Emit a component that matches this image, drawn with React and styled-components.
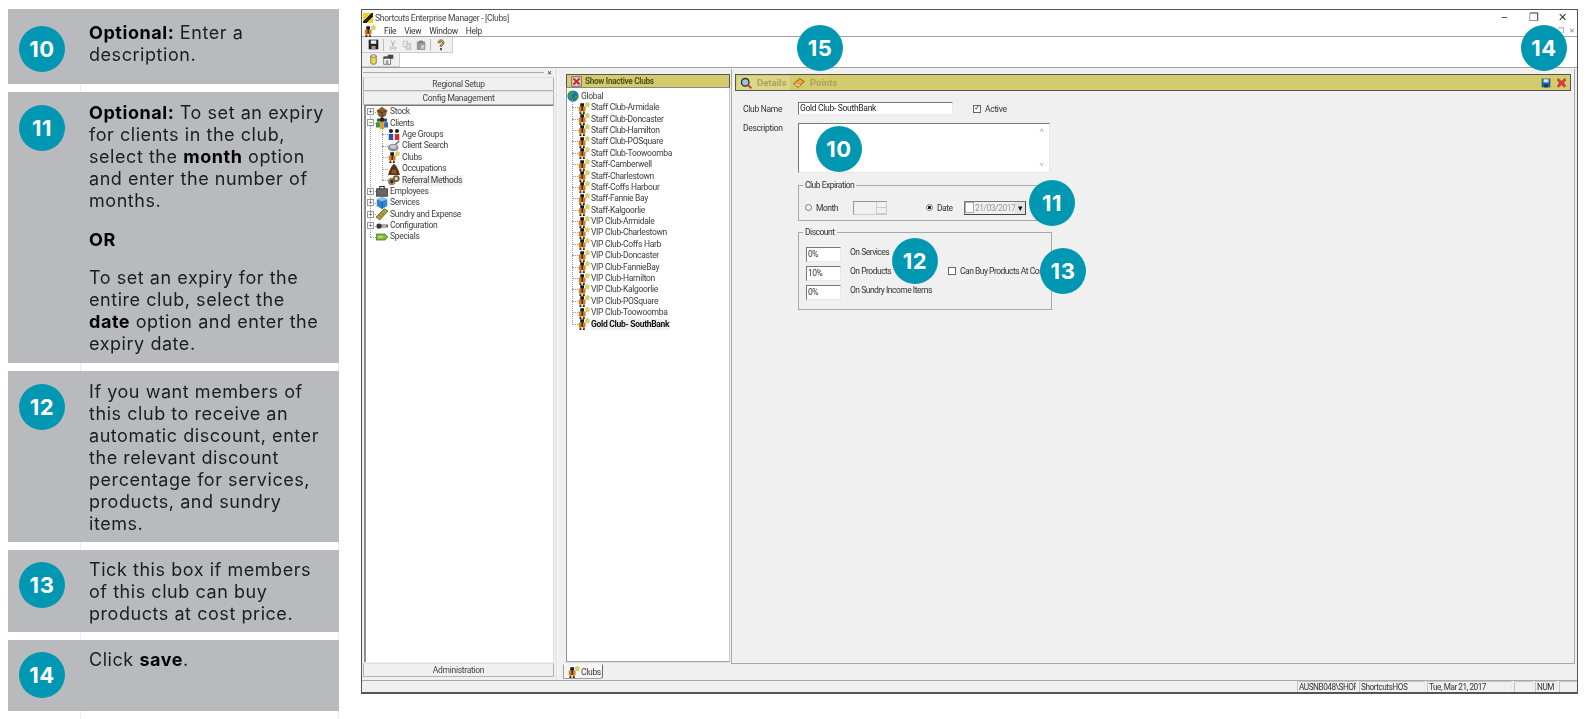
import React from 'react'
import styled, { createGlobalStyle } from 'styled-components'

const CLUBS = [
  'Staff Club-Armidale',
  'Staff Club-Doncaster',
  'Staff Club-Hamilton',
  'Staff Club-POSquare',
  'Staff Club-Toowoomba',
  'Staff-Camberwell',
  'Staff-Charlestown',
  'Staff-Coffs Harbour',
  'Staff-Fannie Bay',
  'Staff-Kalgoorlie',
  'VIP Club-Armidale',
  'VIP Club-Charlestown',
  'VIP Club-Coffs Harb',
  'VIP Club-Doncaster',
  'VIP Club-FannieBay',
  'VIP Club-Hamilton',
  'VIP Club-Kalgoorlie',
  'VIP Club-POSquare',
  'VIP Club-Toowoomba',
]

const BADGES = [
  { n: 10, x: 816, y: 126 },
  { n: 11, x: 1029, y: 180 },
  { n: 12, x: 892, y: 238 },
  { n: 13, x: 1040, y: 248 },
  { n: 14, x: 1521, y: 25 },
  { n: 15, x: 797, y: 25 },
]

// small toolbar / tree pictures, all on a 16 box
const ICONS = {
  club: (
    <>
      <path d="M1 6h9v6H9v3H6.500v-3h-2v3H2v-3H1z" fill="#cf7d1e" />
      <path d="M3 1.500h5v4.500H3zM4.800 6h1.600v6H4.800zM2 14h2.500v2H2zM6.500 14H9v2H6.500z" fill="#1e1a14" />
      <path d="M12.500 0l1.100 2.100 2.300.4-1.700 1.600.4 2.400-2.100-1.100-2.100 1.100.4-2.400-1.700-1.600 2.300-.4z" fill="#efdc3c" stroke="#7d7224" strokeWidth=".4" />
    </>
  ),
  globe: (
    <>
      <circle cx="8" cy="8" r="7.500" fill="#1c6fc2" />
      <path d="M4 2l4-1 2 3-4 3 1 4-2 2-4-5zM10 8l5-1 0 3-3 4-2-3z" fill="#3c9c3a" />
    </>
  ),
  stock: (
    <>
      <path d="M1 6l7-5 7 5-2 7-5 3-5-3z" fill="#8a5a2e" />
      <path d="M1 6l7 3 7-3M8 9v7" stroke="#4b2f17" fill="none" />
    </>
  ),
  clients: (
    <>
      <circle cx="3.500" cy="4" r="2.500" fill="#2f6f3a" />
      <circle cx="12.500" cy="4" r="2.500" fill="#1f4f8f" />
      <path d="M0 7h6v7H0z" fill="#3a8f4a" />
      <path d="M10 7h6v7h-6z" fill="#2b6cb8" />
      <path d="M5 6h6v10H5z" fill="#e0a020" />
      <circle cx="8" cy="3.500" r="3" fill="#222" />
    </>
  ),
  ages: (
    <>
      <circle cx="4" cy="4" r="2.800" fill="#222" />
      <circle cx="12" cy="4" r="2.800" fill="#222" />
      <path d="M1 8h6v8H1z" fill="#2450b0" />
      <path d="M9 8h6v8H9z" fill="#d42a2a" />
    </>
  ),
  search: (
    <>
      <ellipse cx="7" cy="10" rx="7" ry="5" fill="#8c8c96" />
      <ellipse cx="7" cy="9" rx="4.500" ry="2.800" fill="#c9c9d2" />
      <path d="M10 6l5-5" stroke="#66666e" strokeWidth="2" />
    </>
  ),
  occupation: (
    <>
      <path d="M5 4l3-3 3 3 3 6 2 6H0l2-6z" fill="#5c3413" />
      <path d="M5 9h6v5H5z" fill="#8a5a2e" />
    </>
  ),
  referral: (
    <>
      <circle cx="5" cy="10" r="5" fill="#a08058" />
      <circle cx="11" cy="6" r="4.500" fill="#6d5a3c" />
      <circle cx="11" cy="6" r="2.200" fill="#ddd2b8" />
      <circle cx="5" cy="10" r="2.200" fill="#33291a" />
    </>
  ),
  employees: (
    <>
      <path d="M0.500 5h15v10H.500z" fill="#6a6560" stroke="#2e2b28" />
      <path d="M5 5V2h6v3" fill="none" stroke="#2e2b28" strokeWidth="1.400" />
    </>
  ),
  services: (
    <>
      <path d="M8 0l7 3v9l-7 4-7-4V3z" fill="#2f86d6" />
      <path d="M1 3l7 3 7-3-7-3z" fill="#86c0ee" />
      <path d="M8 6v10" stroke="#174f86" />
    </>
  ),
  sundry: (
    <>
      <path d="M0 12L11 1l5 3L5 16z" fill="#a9a23a" stroke="#5f5a1c" />
      <path d="M4 9l3 3M7 6l3 3" stroke="#5f5a1c" />
    </>
  ),
  config: (
    <>
      <circle cx="4" cy="8" r="3.500" fill="#333" />
      <path d="M6 6h10v4H6z" fill="#5a5a5a" />
      <path d="M8 7h6v2H8z" fill="#c8c8c8" />
    </>
  ),
  specials: (
    <>
      <path d="M0.500 4h11.500l3.500 4-3.500 4H.500z" fill="#7fbf3a" stroke="#3d6b1e" />
      <path d="M3 7h6v2H3z" fill="#e0e060" />
    </>
  ),
  save: (
    <>
      <path d="M1 1h14v14H1z" fill="#222" />
      <path d="M4 2h8v5H4z" fill="#eee" />
      <path d="M5 10h6v5H5z" fill="#999" />
    </>
  ),
  cut: <path d="M5 1l4 9M11 1L7 10M5 11a2 2 0 1 0 .1 0M11 11a2 2 0 1 0 .1 0" stroke="#aaa" fill="none" strokeWidth="1.300" />,
  copy: (
    <>
      <path d="M2 2h7v9H2z" fill="#eee" stroke="#aaa" />
      <path d="M7 6h7v9H7z" fill="#ddd" stroke="#aaa" />
    </>
  ),
  paste: (
    <>
      <path d="M2 3h12v12H2z" fill="#999" stroke="#777" />
      <path d="M5 1h6v3H5z" fill="#777" />
      <path d="M7 7h7v8H7z" fill="#ccc" stroke="#888" />
    </>
  ),
  help: (
    <>
      <path d="M4 5a4 4 0 1 1 6 3.500L9 10H7V8l2-1.500a1.500 1.500 0 1 0-2-1.500z" fill="#d8a81e" stroke="#333" strokeWidth=".8" />
      <path d="M7 12h2v3H7z" fill="#222" />
    </>
  ),
  cylinder: (
    <>
      <path d="M4 3h8v10a4 2 0 0 1-8 0z" fill="#e8d84c" stroke="#555" />
      <ellipse cx="8" cy="3" rx="4" ry="2" fill="#f4ec90" stroke="#555" />
    </>
  ),
  windows: (
    <>
      <path d="M1 4h10v11H1z" fill="#fff" stroke="#444" />
      <path d="M1 4h10v3H1zM7 1h8v6h-4V4H7z" fill="#444" />
      <path d="M4 9h4v6H4z" fill="#999" />
    </>
  ),
  inactive: (
    <>
      <path d="M1 1h14v14H1z" fill="#ddd" stroke="#444" />
      <path d="M3.500 3.500l9 9M12.500 3.500l-9 9" stroke="#d22" strokeWidth="3" />
    </>
  ),
  details: (
    <>
      <circle cx="7" cy="7" r="5" fill="#9fc4d8" stroke="#333" strokeWidth="1.800" />
      <path d="M10 10l5 5" stroke="#c33" strokeWidth="2.400" />
    </>
  ),
  points: (
    <>
      <path d="M1 9l8-7 6 4-8 8z" fill="#e8a63a" stroke="#6b4a12" />
      <path d="M3 10l6 2" stroke="#fff" />
    </>
  ),
  disk: (
    <>
      <path d="M1 1h14v14H1z" fill="#1f5f9c" />
      <path d="M4 2h8v5H4z" fill="#d8e6f2" />
      <path d="M5 10h6v5H5z" fill="#123c63" />
    </>
  ),
  close: <path d="M3 2l5 4 5-4 1 3-3 3 3 5-2 2-4-4-4 4-2-2 3-5-3-3z" fill="#e23a3a" stroke="#7a1414" strokeWidth=".6" />,
}

const Icon = ({ name, size = 12 }) => (
  <IconBox viewBox="0 0 16 16" $size={size}>
    {ICONS[name]}
  </IconBox>
)

const Step = ({ n, height, bulletTop = 13, textTop = 10, children }) => (
  <Card $height={height}>
    <Bullet $top={bulletTop}>{n}</Bullet>
    <CardText $top={textTop}>{children}</CardText>
  </Card>
)

const TreeItem = ({ icon, label, expander, child, active }) => (
  <TreeRow $child={child}>
    <Elbow $child={child}>{expander && <Expander>{expander}</Expander>}</Elbow>
    <Icon name={icon} />
    <TreeLabel $active={active}>{label}</TreeLabel>
  </TreeRow>
)

function App() {
  return (
    <Page>
      <GlobalStyle />
      <Steps>
        <Step n={10} height={75} bulletTop={17} textTop={13}>
          <p><b>Optional:</b> Enter a description.</p>
        </Step>
        <Step n={11} height={271}>
          <p><b>Optional:</b> To set an expiry for clients in the club, select the <b>month</b> option and enter the number of months.</p>
          <p><b>OR</b></p>
          <p>To set an expiry for the entire club, select the <b>date</b> option and enter the expiry date.</p>
        </Step>
        <Step n={12} height={171}>
          <p>If you want members of this club to receive an automatic discount, enter the relevant discount percentage for services, products, and sundry items.</p>
        </Step>
        <Step n={13} height={82} bulletTop={12} textTop={9}>
          <p>Tick this box if members of this club can buy products at cost price.</p>
        </Step>
        <Step n={14} height={71} bulletTop={12} textTop={9}>
          <p>Click <b>save</b>.</p>
        </Step>
      </Steps>

      <Window>
        <TitleBar>
          <AppMark />
          <span>Shortcuts Enterprise Manager - [Clubs]</span>
          <WindowControls>
            <span>&#8211;</span>
            <span>&#10064;</span>
            <span>&#10005;</span>
          </WindowControls>
        </TitleBar>

        <MenuBar>
          <Icon name="club" />
          <MenuItem>File</MenuItem>
          <MenuItem>View</MenuItem>
          <MenuItem>Window</MenuItem>
          <MenuItem>Help</MenuItem>
          <MdiControls>
            <span>&#10064;</span>
            <span>&#10005;</span>
          </MdiControls>
        </MenuBar>

        <ToolbarRow $height={16}>
          <Toolbar>
            <Icon name="save" size={11} />
            <ToolSep />
            <Icon name="cut" size={10} />
            <Icon name="copy" size={10} />
            <Icon name="paste" size={10} />
            <ToolSep />
            <Icon name="help" size={12} />
          </Toolbar>
        </ToolbarRow>
        <ToolbarRow $height={14}>
          <Toolbar>
            <Icon name="cylinder" size={11} />
            <Icon name="windows" size={11} />
          </Toolbar>
        </ToolbarRow>

        <Workspace>
          <LeftPane>
            <PaneHeader>
              <PaneGrip />
              <PaneClose>&#10005;</PaneClose>
            </PaneHeader>
            <PaneButton>Regional Setup</PaneButton>
            <PaneButton>Config Management</PaneButton>
            <TreeBox>
              <TreeList>
                <TreeItem icon="stock" label="Stock" expander="+" />
                <TreeItem icon="clients" label="Clients" expander="&#8722;" />
                <ChildList>
                  <TreeItem child icon="ages" label="Age Groups" />
                  <TreeItem child icon="search" label="Client Search" />
                  <TreeItem child icon="club" label="Clubs" />
                  <TreeItem child icon="occupation" label="Occupations" />
                  <TreeItem child active icon="referral" label="Referral Methods" />
                </ChildList>
                <TreeItem icon="employees" label="Employees" expander="+" />
                <TreeItem icon="services" label="Services" expander="+" />
                <TreeItem icon="sundry" label="Sundry and Expense" expander="+" />
                <TreeItem icon="config" label="Configuration" expander="+" />
                <TreeItem icon="specials" label="Specials" />
              </TreeList>
            </TreeBox>
            <PaneButton>Administration</PaneButton>
          </LeftPane>

          <Splitter />

          <MiddlePane>
            <YellowBar>
              <Icon name="inactive" size={11} />
              <InactiveLabel>Show Inactive Clubs</InactiveLabel>
            </YellowBar>
            <ClubTree>
              <GlobalRow>
                <Icon name="globe" />
                <TreeLabel>Global</TreeLabel>
              </GlobalRow>
              <ClubList>
                {CLUBS.map((name) => (
                  <ClubRow key={name}>
                    <ClubElbow />
                    <Icon name="club" />
                    <ClubLabel>{name}</ClubLabel>
                  </ClubRow>
                ))}
                <ClubRow>
                  <ClubElbow />
                  <Icon name="club" />
                  <ClubLabel $active $bold>Gold Club- SouthBank</ClubLabel>
                </ClubRow>
              </ClubList>
            </ClubTree>
            <TabStrip>
              <Tab>
                <Icon name="club" />
                Clubs
              </Tab>
            </TabStrip>
          </MiddlePane>

          <DetailColumn>
            <DetailPane>
              <DetailBar>
                <BarTab $width="53px" $lit>
                  <Icon name="details" />
                  Details
                </BarTab>
                <BarTab>
                  <Icon name="points" />
                  Points
                </BarTab>
                <BarActions>
                  <Icon name="disk" size={10} />
                  <Icon name="close" size={11} />
                </BarActions>
              </DetailBar>

              <Form>
                <FormRow>
                  <FieldLabel>Club Name</FieldLabel>
                  <TextBox $width={155}>Gold Club- SouthBank</TextBox>
                  <ActiveCheck>
                    <CheckBox $checked>&#10003;</CheckBox>
                    Active
                  </ActiveCheck>
                </FormRow>

                <DescriptionRow>
                  <FieldLabel>Description</FieldLabel>
                  <DescriptionBox>
                    <ScrollArrows>
                      <span>&#708;</span>
                      <span>&#709;</span>
                    </ScrollArrows>
                  </DescriptionBox>
                </DescriptionRow>

                <Group $height={36} $top={12}>
                  <GroupLegend>Club Expiration</GroupLegend>
                  <ExpiryRow>
                    <RadioLabel $width={48}>
                      <Radio />
                      Month
                    </RadioLabel>
                    <Spinner>
                      <SpinnerArrows>
                        <span />
                        <span />
                      </SpinnerArrows>
                    </Spinner>
                    <RadioLabel $width={38}>
                      <Radio $on />
                      Date
                    </RadioLabel>
                    <DateBox>
                      <DateCheck />
                      <DateValue>21/03/2017</DateValue>
                      <DateArrow>&#9662;</DateArrow>
                    </DateBox>
                  </ExpiryRow>
                </Group>

                <Group $height={78} $top={11}>
                  <GroupLegend>Discount</GroupLegend>
                  <DiscountGrid>
                    <DiscountRows>
                      <DiscountRow>
                        <PercentBox>0%</PercentBox>
                        On Services
                      </DiscountRow>
                      <DiscountRow>
                        <PercentBox>10%</PercentBox>
                        On Products
                      </DiscountRow>
                      <DiscountRow>
                        <PercentBox>0%</PercentBox>
                        On Sundry Income Items
                      </DiscountRow>
                    </DiscountRows>
                    <CostCheck>
                      <CheckBox />
                      Can Buy Products At Cost
                    </CostCheck>
                  </DiscountGrid>
                </Group>
              </Form>
            </DetailPane>
          </DetailColumn>
        </Workspace>

        <StatusBar>
          <StatusCell $width={60}>AUSNB048\SHOR</StatusCell>
          <StatusCell $width={66}>ShortcutsHOS</StatusCell>
          <StatusCell $width={85}>Tue, Mar 21, 2017</StatusCell>
          <StatusCell $width={19} />
          <StatusCell $width={22}>NUM</StatusCell>
          <StatusCell $width={18} />
        </StatusBar>
      </Window>

      {BADGES.map((b) => (
        <FloatingBadge key={b.n} $x={b.x} $y={b.y}>
          {b.n}
        </FloatingBadge>
      ))}
    </Page>
  )
}

export default App

const GlobalStyle = createGlobalStyle`
  html, body {
    margin: 0;
    padding: 0;
    background: #fff;
  }
  * {
    box-sizing: border-box;
  }
`

const Page = styled.div`
  position: relative;
  width: 1588px;
  height: 719px;
  padding: 9px 10px 0 8px;
  display: flex;
  align-items: flex-start;
  gap: 22px;
  overflow: hidden;
  background: #fff;
`

const IconBox = styled.svg`
  width: ${(p) => p.$size}px;
  height: ${(p) => p.$size}px;
  flex: none;
`

const Steps = styled.div`
  width: 331px;
  height: 710px;
  flex: none;
  display: flex;
  flex-direction: column;
  gap: 8px;
  background:
    linear-gradient(#eee, #eee) 72px 0 / 1px 100% no-repeat,
    linear-gradient(#eee, #eee) 330px 0 / 1px 100% no-repeat;
`

const Card = styled.div`
  height: ${(p) => p.$height}px;
  flex: none;
  display: flex;
  padding-left: 11px;
  background: #b9babd;
`

const badgeLook = `
  width: 46px;
  height: 46px;
  border-radius: 50%;
  background: #0097b2;
  color: #fff;
  display: flex;
  align-items: center;
  justify-content: center;
  font-family: 'Inter', 'Liberation Sans', sans-serif;
  font-weight: 700;
  font-size: 22px;
  letter-spacing: 0.6px;
`

const Bullet = styled.div`
  ${badgeLook}
  flex: none;
  margin-top: ${(p) => p.$top}px;
`

const FloatingBadge = styled.div`
  ${badgeLook}
  position: absolute;
  left: ${(p) => p.$x}px;
  top: ${(p) => p.$y}px;
`

const CardText = styled.div`
  margin: ${(p) => p.$top}px 0 0 24px;
  width: 240px;
  font-family: 'Inter', 'Liberation Sans', sans-serif;
  font-size: 18px;
  letter-spacing: 0.55px;
  line-height: 22px;
  color: #1d1d1f;
  filter: blur(0.3px);

  p {
    margin: 0 0 16.5px;
  }

  b {
    font-weight: 700;
    color: #000;
  }
`

const Window = styled.div`
  width: 1217px;
  height: 685px;
  flex: none;
  display: flex;
  flex-direction: column;
  border: 1px solid #555;
  border-bottom-width: 2px;
  background: #f0f0f0;
  font-family: 'Roboto', 'Liberation Sans', sans-serif;
  font-size: 8.5px;
  letter-spacing: -0.3px;
  color: #333;
  filter: blur(0.35px);
`

const TitleBar = styled.div`
  height: 15px;
  flex: none;
  display: flex;
  align-items: center;
  gap: 2px;
  padding-left: 0;
  background: #fff;
  color: #444;
`

const AppMark = styled.div`
  width: 10px;
  height: 10px;
  margin-left: 1px;
  background: linear-gradient(135deg, #f0d020 45%, #222 45%, #222 70%, #f0d020 70%);
`

const WindowControls = styled.div`
  margin-left: auto;
  display: flex;
  font-size: 11px;
  color: #333;
  padding-right: 10px;
  gap: 20px;

  span {
    width: 9px;
    text-align: center;
  }
`

const MenuBar = styled.div`
  height: 12px;
  flex: none;
  display: flex;
  align-items: center;
  gap: 8px;
  padding-left: 2px;
  background: #fff;
  border-bottom: 1px solid #a0a0a0;
`

const MenuItem = styled.span`
  color: #333;
`

const MdiControls = styled.div`
  margin-left: auto;
  padding-right: 2px;
  display: flex;
  gap: 6px;
  font-size: 7px;
  color: #889;
`

const ToolbarRow = styled.div`
  height: ${(p) => p.$height}px;
  flex: none;
  display: flex;
  background: #fff;
`

const Toolbar = styled.div`
  display: flex;
  align-items: center;
  gap: 4px;
  padding: 0 5px 0 6px;
  background: #f0f0f0;
  border-right: 1px solid #ccc;
  border-bottom: 1px solid #ccc;
`

const ToolSep = styled.div`
  width: 1px;
  height: 12px;
  background: #bbb;
`

const Workspace = styled.div`
  flex: 1;
  min-height: 0;
  display: flex;
  border-top: 1px solid #a0a0a0;
  border-bottom: 1px solid #a8a8a8;
`

const LeftPane = styled.div`
  width: 191px;
  flex: none;
  margin-left: 1px;
  padding-bottom: 3px;
  display: flex;
  flex-direction: column;
`

const PaneHeader = styled.div`
  height: 9px;
  flex: none;
  display: flex;
  align-items: center;
  gap: 3px;
`

const PaneGrip = styled.div`
  flex: 1;
  height: 1px;
  background: #aaa;
`

const PaneClose = styled.span`
  font-size: 6px;
  color: #222;
  padding-right: 2px;
`

const PaneButton = styled.div`
  height: 14px;
  flex: none;
  display: flex;
  align-items: center;
  justify-content: center;
  background: #f0f0f0;
  border: 1px solid #b4b4b4;
  border-top-color: #ddd;
  color: #444;
`

const TreeBox = styled.div`
  flex: 1;
  min-height: 0;
  margin: 0 0 1px 1px;
  background: #fff;
  border-top: 1px solid #777;
  border-left: 2px solid #909090;
  border-right: 1px solid #ddd;
`

const TreeList = styled.div`
  position: relative;

  &::before {
    content: '';
    position: absolute;
    left: 4px;
    top: 6px;
    bottom: 6px;
    border-left: 1px dotted #999;
  }
`

const ChildList = styled.div`
  position: relative;

  &::before {
    content: '';
    position: absolute;
    left: 16px;
    top: -3px;
    bottom: 6px;
    border-left: 1px dotted #999;
  }
`

const TreeRow = styled.div`
  position: relative;
  height: 11.4px;
  display: flex;
  align-items: center;
  margin-left: ${(p) => (p.$child ? 12 : 0)}px;
`

const Elbow = styled.div`
  position: relative;
  width: 10px;
  height: 100%;
  flex: none;

  &::after {
    content: '';
    position: absolute;
    left: 4px;
    right: 0;
    top: 50%;
    border-top: 1px dotted #999;
  }
`

const Expander = styled.span`
  position: absolute;
  z-index: 1;
  left: 1px;
  top: 2px;
  width: 7px;
  height: 7px;
  display: flex;
  align-items: center;
  justify-content: center;
  background: #fff;
  border: 1px solid #999;
  font-family: 'Liberation Sans', sans-serif;
  font-size: 7px;
  line-height: 1;
  color: #333;
`

const TreeLabel = styled.span`
  margin-left: 2px;
  padding: 0 1px 0 0;
  white-space: nowrap;
  line-height: 11px;
  color: ${(p) => (p.$bold ? '#111' : '#3c3c3c')};
  font-weight: ${(p) => (p.$bold ? 700 : 400)};
  background: ${(p) => (p.$active ? '#f0f0f0' : 'transparent')};
`

const ClubLabel = styled(TreeLabel)`
  margin-left: 1px;
`

const Splitter = styled.div`
  width: 1px;
  flex: none;
  margin: 0 8px 0 3px;
  background: #fbfbfb;
  box-shadow: -1px 0 0 #ddd;
`

const MiddlePane = styled.div`
  width: 164px;
  flex: none;
  display: flex;
  flex-direction: column;
  padding-top: 6px;
`

const YellowBar = styled.div`
  height: 14px;
  flex: none;
  display: flex;
  align-items: center;
  gap: 3px;
  padding-left: 4px;
  background: #d4cc6c;
  border: 1px solid #555;
  border-bottom-color: #888;
`

const InactiveLabel = styled.span`
  font-weight: 700;
  color: #55511f;
  font-size: 8.2px;
`

const ClubTree = styled.div`
  flex: 1;
  min-height: 0;
  background: #fff;
  border-left: 1px solid #909090;
  border-right: 1px solid #c8c8c8;
  border-bottom: 1px solid #a0a0a0;
  padding-top: 2px;
`

const GlobalRow = styled.div`
  height: 12px;
  display: flex;
  align-items: center;
`

const ClubList = styled.div`
  position: relative;

  &::before {
    content: '';
    position: absolute;
    left: 5px;
    top: -3px;
    bottom: 5px;
    border-left: 1px dotted #999;
  }
`

const ClubRow = styled.div`
  height: 11.4px;
  display: flex;
  align-items: center;
  padding-left: 5px;
`

const ClubElbow = styled.span`
  width: 6px;
  flex: none;
  border-top: 1px dotted #999;
`

const TabStrip = styled.div`
  height: 18px;
  flex: none;
  border-top: 1px solid #e4e4e4;
`

const Tab = styled.div`
  width: 40px;
  height: 15px;
  margin: 1px 0 0 -3px;
  display: flex;
  align-items: center;
  gap: 1px;
  padding-left: 4px;
  background: #f6f6f6;
  border: 1px solid #a0a0a0;
  border-top-color: #f6f6f6;
  border-right-color: #666;
  border-radius: 0 0 3px 0;
  color: #333;
`

const DetailColumn = styled.div`
  flex: 1;
  min-width: 0;
  padding: 1px 2px 16px 1px;
`

const DetailPane = styled.div`
  height: 100%;
  padding: 5px 3px 0;
  border-left: 1px solid #a8a8a8;
  border-right: 1px solid #a8a8a8;
  border-bottom: 1px solid #a8a8a8;
`

const DetailBar = styled.div`
  height: 17px;
  display: flex;
  align-items: center;
  padding: 0 1px;
  background: #d4cc6c;
  border: 1px solid #555;
`

const BarTab = styled.div`
  height: 14px;
  width: ${(p) => p.$width || 'auto'};
  display: flex;
  align-items: center;
  gap: 5px;
  padding-left: 3px;
  font-size: 9.5px;
  letter-spacing: 0;
  font-weight: 700;
  color: #a9a35c;
  background: ${(p) => (p.$lit ? '#dcd688' : 'transparent')};
`

const BarActions = styled.div`
  margin-left: auto;
  display: flex;
  align-items: center;
  gap: 5px;
  padding-right: 2px;
`

const Form = styled.div`
  display: flex;
  flex-direction: column;
  padding: 11px 0 0 8px;
`

const FormRow = styled.div`
  height: 13px;
  display: flex;
  align-items: center;
`

const FieldLabel = styled.span`
  width: 55px;
  flex: none;
`

const sunken = `
  background: #fff;
  border-top: 1px solid #777;
  border-left: 1px solid #777;
  border-right: 1px solid #e8e8e8;
  border-bottom: 1px solid #e8e8e8;
`

const TextBox = styled.div`
  ${sunken}
  width: ${(p) => p.$width}px;
  height: 13px;
  padding-left: 1px;
  line-height: 11px;
  color: #222;
`

const ActiveCheck = styled.label`
  margin-left: 20px;
  display: flex;
  align-items: center;
  gap: 4px;
`

const CheckBox = styled.span`
  width: 8px;
  height: 8px;
  display: flex;
  align-items: center;
  justify-content: center;
  background: #fff;
  border: 1px solid #666;
  font-family: 'DejaVu Sans', sans-serif;
  font-size: 7px;
  font-weight: 700;
  line-height: 1;
  color: #222;
`

const DescriptionRow = styled.div`
  margin-top: 8px;
  display: flex;
  align-items: flex-start;
  line-height: 10px;
`

const DescriptionBox = styled.div`
  ${sunken}
  width: 252px;
  height: 50px;
  display: flex;
  justify-content: flex-end;
`

const ScrollArrows = styled.div`
  width: 15px;
  display: flex;
  flex-direction: column;
  justify-content: space-between;
  align-items: center;
  color: #aaa;
  font-size: 8px;
  padding: 2px 0;
`

const Group = styled.div`
  position: relative;
  width: 254px;
  height: ${(p) => p.$height}px;
  margin: ${(p) => p.$top}px 0 0 55px;
  border: 1px solid #a8a8a8;
  letter-spacing: -0.5px;
`

const GroupLegend = styled.span`
  position: absolute;
  left: 4px;
  top: -6px;
  padding: 0 2px;
  line-height: 10px;
  background: #f0f0f0;
`

const ExpiryRow = styled.div`
  display: flex;
  align-items: center;
  height: 100%;
  padding: 9px 0 0 6px;
`

const RadioLabel = styled.label`
  width: ${(p) => p.$width}px;
  flex: none;
  display: flex;
  align-items: center;
  gap: 4px;
`

const Radio = styled.span`
  width: 7px;
  height: 7px;
  flex: none;
  border-radius: 50%;
  border: 1px solid #777;
  background: ${(p) => (p.$on ? 'radial-gradient(#222 40%, #fff 45%)' : '#fff')};
`

const Spinner = styled.div`
  width: 34px;
  height: 14px;
  flex: none;
  margin-right: 39px;
  display: flex;
  justify-content: flex-end;
  border: 1px solid #999;
  border-right-color: #ccc;
  border-bottom-color: #ccc;
`

const SpinnerArrows = styled.div`
  width: 10px;
  display: flex;
  flex-direction: column;
  border-left: 1px solid #ccc;

  span {
    flex: 1;
    border-bottom: 1px solid #ccc;
  }
`

const DateBox = styled.div`
  width: 62px;
  height: 14px;
  flex: none;
  display: flex;
  align-items: center;
  border: 1px solid #777;
  border-right-color: #444;
  border-bottom-color: #444;
`

const DateCheck = styled.span`
  width: 9px;
  height: 11px;
  background: #fff;
  border: 1px solid #aaa;
  flex: none;
`

const DateValue = styled.span`
  flex: 1;
  padding-left: 1px;
  color: #999;
  white-space: nowrap;
`

const DateArrow = styled.span`
  width: 10px;
  height: 100%;
  display: flex;
  align-items: center;
  justify-content: center;
  font-family: 'DejaVu Sans', sans-serif;
  font-size: 9px;
  color: #111;
  background: #e4e4e4;
`

const DiscountGrid = styled.div`
  display: flex;
  align-items: flex-start;
  padding: 14px 0 0 7px;
`

const DiscountRows = styled.div`
  width: 142px;
  flex: none;
  display: flex;
  flex-direction: column;
  gap: 4px;
`

const DiscountRow = styled.div`
  height: 15px;
  display: flex;
  align-items: flex-start;
  gap: 9px;
  line-height: 10px;
  white-space: nowrap;
`

const PercentBox = styled.span`
  ${sunken}
  width: 35px;
  height: 15px;
  padding-left: 1px;
  line-height: 12px;
  color: #333;
`

const CostCheck = styled.label`
  margin-top: 19px;
  display: flex;
  align-items: center;
  gap: 4px;
  white-space: nowrap;
`

const StatusBar = styled.div`
  height: 11px;
  flex: none;
  display: flex;
  justify-content: flex-end;
  gap: 2px;
`

const StatusCell = styled.div`
  width: ${(p) => p.$width}px;
  padding-left: 1px;
  border-top: 1px solid #c4c4c4;
  border-left: 1px solid #c4c4c4;
  border-right: 1px solid #e8e8e8;
  font-size: 8.2px;
  letter-spacing: -0.45px;
  line-height: 10px;
  white-space: nowrap;
  overflow: hidden;
  color: #333;
`
